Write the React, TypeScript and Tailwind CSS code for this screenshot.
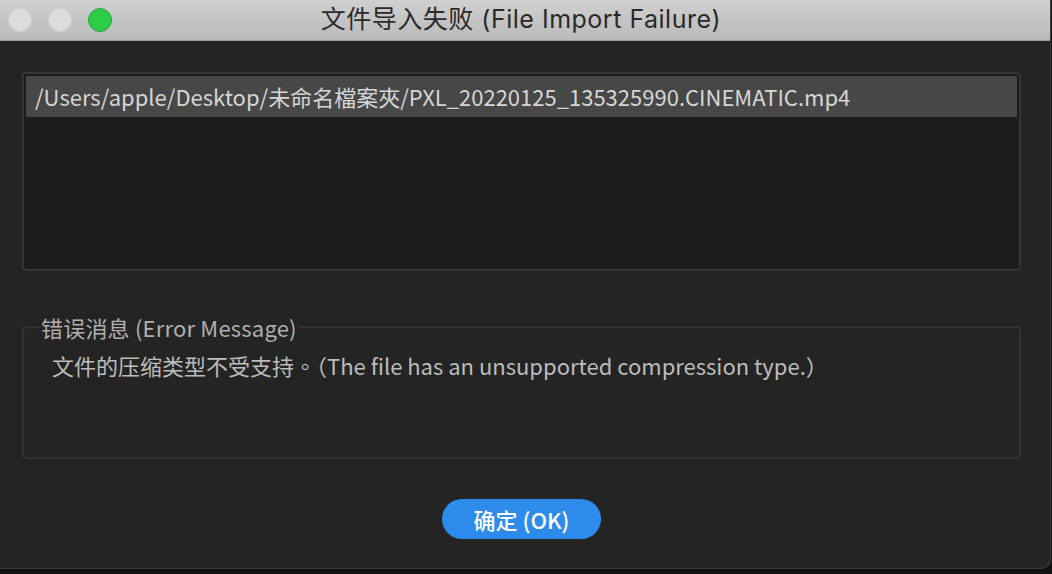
const cjk = { fontFamily: '"Noto Sans CJK SC", "Noto Sans", sans-serif' };
const tc = { fontFamily: '"Noto Sans CJK TC", sans-serif' };
const titleFont = { fontFamily: 'Inter, "Noto Sans CJK SC", sans-serif' };

function TrafficLights() {
  return (
    <div className="absolute left-[8px] top-[8px] flex gap-[16px]">
      <span className="h-[24px] w-[24px] rounded-full border border-[#cfcfcf] bg-[#dcdcdc]" />
      <span className="h-[24px] w-[24px] rounded-full border border-[#cfcfcf] bg-[#dcdcdc]" />
      <span className="h-[24px] w-[24px] rounded-full border border-[#24a53c] bg-[#2ecb48]" />
    </div>
  );
}

export default function App() {
  return (
    <div className="h-[574px] w-[1052px] overflow-hidden bg-[#121212]">
      <div className="flex h-[569px] w-[1051px] flex-col overflow-hidden rounded-br-[10px] border-b border-r border-[#3e3e3e] bg-[#242424]">
        <div className="relative flex h-[41px] shrink-0 items-center justify-center border-b border-[#9c9c9c] bg-gradient-to-b from-[#d0d0d0] to-[#bababa]">
          <TrafficLights />
          <span className="pr-[8px] text-[25px] tracking-[0.5px] text-[#2a2a2a]" style={titleFont}>
            文件导入失败 (File Import Failure)
          </span>
        </div>

        <div className="ml-[22px] mr-[29px] flex flex-1 flex-col pb-[29px] pt-[31px]" style={cjk}>
          <div className="h-[199px] rounded-[4px] border-2 border-[#353535] bg-[#1c1c1c] p-[2px]">
            <div className="flex h-[41px] items-center bg-[#474747] pl-[9px] text-[22px] text-[#d6d6d6]">
              /Users/apple/Desktop/未命名檔案夾/PXL_20220125_135325990.CINEMATIC.mp4
            </div>
          </div>

          <fieldset className="mt-[43px] h-[145px] rounded-[4px] border-2 border-[#333333] px-[16px] pb-0">
            <legend className="px-[1px] text-[22px] leading-[26px] tracking-[0.2px] text-[#b0b0b0]">
              错误消息 (Error Message)
            </legend>
            <p className="mt-[10px] pl-[12px] text-[22px] leading-[30px] text-[#bcbcbc]">
              文件的压缩类型不受支持<span style={tc}>。（</span>The file has an unsupported compression type.<span style={tc}>）</span>
            </p>
          </fieldset>

          <div className="mt-auto flex justify-center">
            <button className="flex h-[40px] w-[159px] items-center justify-center rounded-full bg-[#2d8ceb] text-[22px] font-medium text-white">
              确定 (OK)
            </button>
          </div>
        </div>
      </div>
    </div>
  );
}
